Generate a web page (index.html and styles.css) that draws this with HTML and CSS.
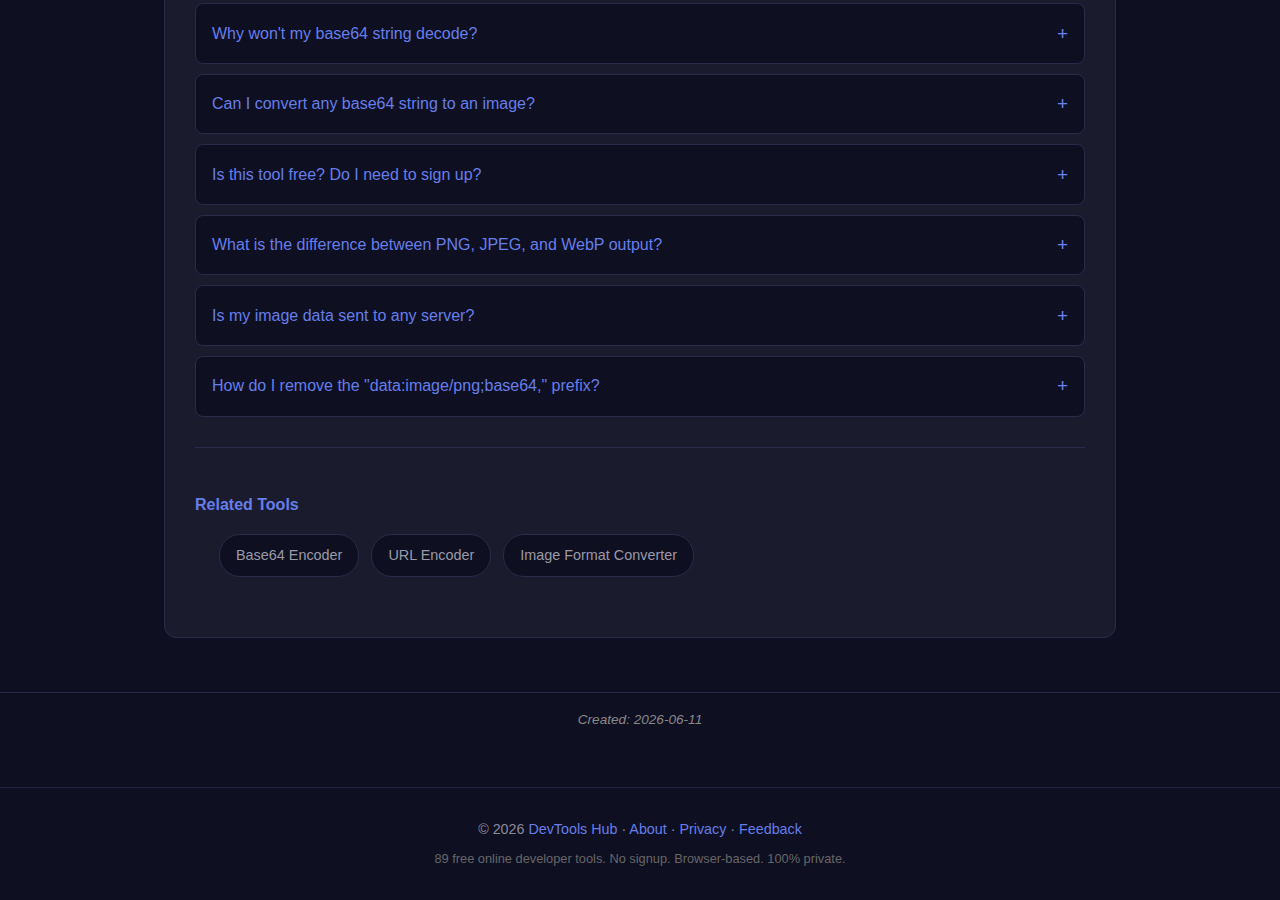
FILE: index.html
```html
<!DOCTYPE html>
<html lang="en">
  <head>
    <meta charset="utf-8">
    <title>Base64 to Image - DevTools Hub</title>
    <link rel="stylesheet" href="styles.css">
  </head>
  <body>
    <main class="tool-card">
      <section class="faq">
        <div class="faq-item"><span>Why won't my base64 string decode?</span><span class="faq-toggle">+</span></div>
        <div class="faq-item"><span>Can I convert any base64 string to an image?</span><span class="faq-toggle">+</span></div>
        <div class="faq-item"><span>Is this tool free? Do I need to sign up?</span><span class="faq-toggle">+</span></div>
        <div class="faq-item"><span>What is the difference between PNG, JPEG, and WebP output?</span><span class="faq-toggle">+</span></div>
        <div class="faq-item"><span>Is my image data sent to any server?</span><span class="faq-toggle">+</span></div>
        <div class="faq-item"><span>How do I remove the "data:image/png;base64," prefix?</span><span class="faq-toggle">+</span></div>
      </section>

      <hr class="divider">

      <section class="related">
        <h3>Related Tools</h3>
        <ul class="related-list">
          <li><a href="#">Base64 Encoder</a></li>
          <li><a href="#">URL Encoder</a></li>
          <li><a href="#">Image Format Converter</a></li>
        </ul>
      </section>
    </main>

    <div class="meta">
      <p class="created">Created: 2026-06-11</p>
    </div>

    <footer class="site-footer">
      <p class="links">&copy; 2026 <a href="#">DevTools Hub</a> &middot; <a href="#">About</a> &middot; <a href="#">Privacy</a> &middot; <a href="#">Feedback</a></p>
      <p class="tagline">89 free online developer tools. No signup. Browser-based. 100% private.</p>
    </footer>
  </body>
</html>
```

FILE: styles.css
```css
body {
  margin: 0;
  background: #0f0f22;
  color: #c8c8d8;
  font-family: "Liberation Sans", Arial, sans-serif;
  font-size: 16px;
}

a { color: #667eea; text-decoration: none; }

.tool-card {
  box-sizing: border-box;
  width: 952px;
  margin: -28px auto 0;
  padding: 30px;
  background: #1b1b2e;
  border: 1px solid #2a2a4a;
  border-radius: 12px;
}

.faq-item {
  display: flex;
  justify-content: space-between;
  align-items: center;
  margin-bottom: 10px;
  padding: 18.5px 16px 17.5px;
  line-height: 22.6px;
  background: #0f0f22;
  border: 1px solid #2a2a4a;
  border-radius: 8px;
  color: #667eea;
}
.faq-toggle {
  font-size: 19px;
  color: #6b80f2;
}

.divider {
  margin: 30px 0 0;
  border: 0;
  border-top: 1px solid #2a2a4a;
}

.related h3 {
  margin: 48px 0 20px;
  font-size: 16px;
  color: #667eea;
}
.related-list {
  display: flex;
  gap: 12px;
  margin: 0 0 30px;
  padding: 0 0 0 24px;
  list-style: none;
}
.related-list a {
  display: block;
  padding: 12px 16px;
  line-height: 17px;
  font-size: 14.4px;
  color: #9a9aa6;
  background: #0f0f22;
  border: 1px solid #2a2a4a;
  border-radius: 21px;
}

.meta {
  margin-top: 54px;
  padding: 19px 0 59px;
  border-top: 1px solid #2a2a4a;
  border-bottom: 1px solid #22223e;
  text-align: center;
}
.created {
  margin: 0;
  font-size: 13.6px;
  font-style: italic;
  color: #888;
  line-height: 16px;
}

.site-footer {
  padding: 32px 0 20px;
  text-align: center;
}
.site-footer p { margin: 0; }
.links {
  font-size: 14.3px;
  line-height: 18px;
  color: #8a8a96;
}
.tagline {
  margin-top: 13px !important;
  font-size: 12.8px;
  color: #666;
}
```
